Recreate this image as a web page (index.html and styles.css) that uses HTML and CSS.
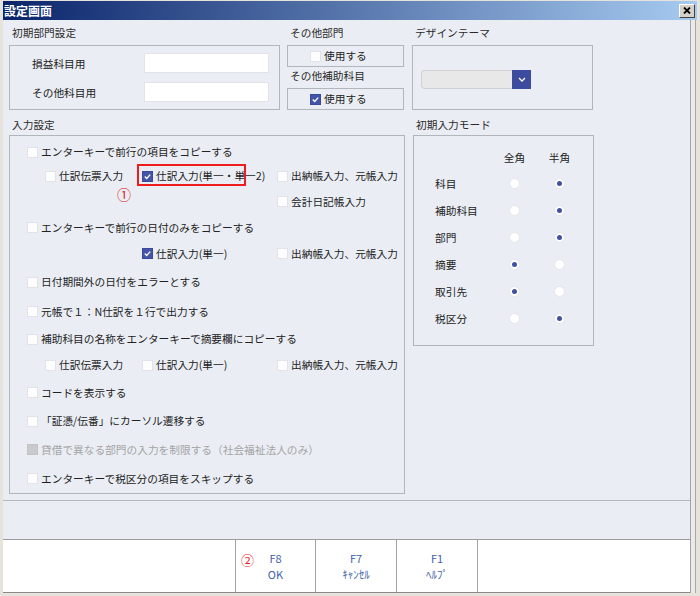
FILE: index.html
```html
<!DOCTYPE html>
<html lang="ja">
<head>
<meta charset="utf-8">
<title>設定画面</title>
<link rel="stylesheet" href="styles.css">
</head>
<body>
<div class="window">
  <div class="titlebar">
    <span class="title">設定画面</span>
    <span class="close"><svg width="8" height="7" viewBox="0 0 8 7"><path d="M1 0.5 L7 6.5 M7 0.5 L1 6.5" stroke="#000" stroke-width="1.8" fill="none"/></svg></span>
  </div>
  <div class="client">
    <div class="content">
      <div class="row-top">
        <div class="col col-dept">
          <div class="glabel">初期部門設定</div>
          <div class="gbox dept-box">
            <span class="flabel">損益科目用</span><span class="field"></span>
            <span class="flabel">その他科目用</span><span class="field"></span>
          </div>
        </div>
        <div class="col col-other">
          <div class="glabel">その他部門</div>
          <div class="gbox mini-box">
            <span class="item"><span class="cb"></span>使用する</span>
          </div>
          <div class="glabel glabel-2">その他補助科目</div>
          <div class="gbox mini-box">
            <span class="item"><span class="cb on"><svg width="9" height="9" viewBox="0 0 9 9"><path d="M1.8 4.6 L3.7 6.4 L7.2 2.6" fill="none" stroke="#fff" stroke-width="1.4"/></svg></span>使用する</span>
          </div>
        </div>
        <div class="col col-theme">
          <div class="glabel">デザインテーマ</div>
          <div class="gbox theme-box">
            <div class="select">
              <span class="select-field"></span>
              <span class="select-btn"><svg width="8" height="5" viewBox="0 0 8 5"><path d="M1 1 L4 4 L7 1" fill="none" stroke="#fff" stroke-width="1.3"/></svg></span>
            </div>
          </div>
        </div>
      </div>

      <div class="row-mid">
        <div class="col col-input">
          <div class="glabel">入力設定</div>
          <div class="gbox input-box">
            <span class="item main"><span class="cb"></span>エンターキーで前行の項目をコピーする</span>
            <span class="item c2"><span class="cb"></span>仕訳伝票入力</span>
            <span class="item c3"><span class="cb on"><svg width="9" height="9" viewBox="0 0 9 9"><path d="M1.8 4.6 L3.7 6.4 L7.2 2.6" fill="none" stroke="#fff" stroke-width="1.4"/></svg></span>仕訳入力(単一・単一2)</span>
            <span class="item c4"><span class="cb"></span>出納帳入力、元帳入力</span>
            <span class="item c4"><span class="cb"></span>会計日記帳入力</span>
            <span class="item main"><span class="cb"></span>エンターキーで前行の日付のみをコピーする</span>
            <span class="item c3"><span class="cb on"><svg width="9" height="9" viewBox="0 0 9 9"><path d="M1.8 4.6 L3.7 6.4 L7.2 2.6" fill="none" stroke="#fff" stroke-width="1.4"/></svg></span>仕訳入力(単一)</span>
            <span class="item c4"><span class="cb"></span>出納帳入力、元帳入力</span>
            <span class="item main"><span class="cb"></span>日付期間外の日付をエラーとする</span>
            <span class="item main"><span class="cb"></span>元帳で１：N仕訳を１行で出力する</span>
            <span class="item main"><span class="cb"></span>補助科目の名称をエンターキーで摘要欄にコピーする</span>
            <span class="item c2"><span class="cb"></span>仕訳伝票入力</span>
            <span class="item c3"><span class="cb"></span>仕訳入力(単一)</span>
            <span class="item c4"><span class="cb"></span>出納帳入力、元帳入力</span>
            <span class="item main"><span class="cb"></span>コードを表示する</span>
            <span class="item main"><span class="cb"></span>「証憑/伝番」にカーソル遷移する</span>
            <span class="item main disabled"><span class="cb dis"></span>貸借で異なる部門の入力を制限する（社会福祉法人のみ）</span>
            <span class="item main"><span class="cb"></span>エンターキーで税区分の項目をスキップする</span>
            <span class="highlight"></span>
            <span class="mark mark-1">①</span>
          </div>
        </div>
        <div class="col col-mode">
          <div class="glabel">初期入力モード</div>
          <div class="gbox mode-box">
            <span></span><span class="mh">全角</span><span class="mh">半角</span>
            <span class="ml">科目</span><span class="rb"></span><span class="rb on"></span>
            <span class="ml">補助科目</span><span class="rb"></span><span class="rb on"></span>
            <span class="ml">部門</span><span class="rb"></span><span class="rb on"></span>
            <span class="ml">摘要</span><span class="rb on"></span><span class="rb"></span>
            <span class="ml">取引先</span><span class="rb on"></span><span class="rb"></span>
            <span class="ml">税区分</span><span class="rb"></span><span class="rb on"></span>
          </div>
        </div>
      </div>
    </div>
    <div class="spacer"></div>
    <div class="footer">
      <div class="fpad"></div>
      <div class="fkey"><span class="mark mark-2">②</span><span>F8</span><span>OK</span></div>
      <div class="fkey"><span>F7</span><span>ｷｬﾝｾﾙ</span></div>
      <div class="fkey"><span>F1</span><span>ﾍﾙﾌﾟ</span></div>
      <div class="fkey"></div>
    </div>
  </div>
</div>
</body>
</html>
```

FILE: styles.css
```css
body {
  margin: 0;
}

.window {
  width: 700px;
  height: 596px;
  box-sizing: border-box;
  padding: 1px 3px 3px 3px;
  background: #e6e3dc;
  display: flex;
  flex-direction: column;
  font-family: "Noto Sans CJK JP", "Noto Sans", sans-serif;
  font-size: 10.7px;
  color: #222;
}

.titlebar {
  height: 19px;
  flex: none;
  display: flex;
  align-items: center;
  justify-content: space-between;
  padding: 0 2px 0 1px;
  background: linear-gradient(to right, #0a246a, #a6caf0);
}

.title {
  color: #fff;
  font-weight: bold;
  font-size: 12px;
  line-height: 19px;
}

.close {
  width: 14px;
  height: 12px;
  background: #d4d0c8;
  border: 1px solid;
  border-color: #fff #404040 #404040 #fff;
  display: flex;
  align-items: center;
  justify-content: center;
}

.client {
  flex: 1;
  min-height: 0;
  display: flex;
  flex-direction: column;
  background: #eaeef4;
  margin-right: 6px;
  border-right: 1px solid #a0a4aa;
  box-shadow: 4px 0 0 #eceae4, 5px 0 0 #a8a8a8;
}

.content {
  flex: 1;
  padding: 5px 0 0 6px;
}

.row-top {
  display: flex;
}

.col-dept {
  width: 271px;
}

.col-other {
  width: 117px;
  margin-left: 7px;
}

.col-theme {
  width: 181px;
  margin-left: 8px;
}

.glabel {
  height: 16px;
  line-height: 16px;
  margin-bottom: 4px;
  padding-left: 3px;
  white-space: nowrap;
  color: #2a2a2a;
}

.glabel-2 {
  margin-top: 1px;
}

.gbox {
  border: 1px solid #b1b5bc;
  box-sizing: border-box;
}

.dept-box {
  height: 65px;
  display: grid;
  grid-template-columns: 112px 125px;
  grid-template-rows: 20px 20px;
  row-gap: 9px;
  padding: 7px 0 0 22px;
  align-items: center;
}

.flabel {
  white-space: nowrap;
}

.field {
  height: 20px;
  background: #fff;
  border: 1px solid #e0e3e8;
  box-sizing: border-box;
}

.mini-box {
  height: 22px;
  display: flex;
  align-items: center;
  padding-left: 22px;
}

.theme-box {
  height: 65px;
  padding: 24px 0 0 8px;
}

.select {
  display: flex;
  width: 110px;
  height: 19px;
}

.select-field {
  flex: 1;
  background: #e8e8e9;
  border: 1px solid #cfd0d3;
  border-right: none;
  border-radius: 4px 0 0 4px;
}

.select-btn {
  width: 19px;
  background: #3d4b9f;
  display: flex;
  align-items: center;
  justify-content: center;
}

.row-mid {
  display: flex;
  margin-top: 7px;
}

.row-mid .glabel {
  margin-bottom: 2px;
}

.col-input {
  width: 396px;
}

.col-mode {
  width: 181px;
  margin-left: 8px;
}

.input-box {
  position: relative;
  height: 359px;
  display: grid;
  grid-template-columns: 18px 97px 135px 1fr;
  grid-template-rows: 24px 24px 27px 25px 27px 30px 29px 26px 26px 29px 28px 29px 29px;
  padding: 4px 0 0 17px;
  align-items: center;
}

.item {
  display: flex;
  align-items: center;
  gap: 3px;
  white-space: nowrap;
  line-height: 14px;
}

.main { grid-column: 1 / -1; }
.c2 { grid-column: 2; }
.c3 { grid-column: 3; }
.c4 { grid-column: 4; }

.disabled {
  color: #a3a3a3;
}

.cb {
  width: 11px;
  height: 11px;
  box-sizing: border-box;
  flex: none;
  background: #fdfdfd;
  border: 1px solid #e1e3e8;
  display: inline-flex;
  align-items: center;
  justify-content: center;
}

.cb.on {
  background: #4454a6;
  border-color: #3a4a9a;
}

.cb.dis {
  background: #c9cacc;
  border-color: #c2c2c2;
}

.highlight {
  position: absolute;
  left: 127px;
  top: 28px;
  width: 109px;
  height: 22px;
  box-sizing: border-box;
  border: 2px solid #ee1c1c;
  pointer-events: none;
}

.mark {
  position: absolute;
  color: #e0201c;
  line-height: 16px;
}

.mark-1 {
  left: 107px;
  top: 50px;
  font-size: 14px;
}

.mode-box {
  height: 211px;
  display: grid;
  grid-template-columns: 57px 45px 45px;
  grid-template-rows: 26px repeat(6, 27px);
  padding: 8px 0 0 21px;
  align-items: center;
}

.mh {
  justify-self: center;
}

.ml {
  white-space: nowrap;
}

.rb {
  justify-self: center;
  width: 11px;
  height: 11px;
  box-sizing: border-box;
  border-radius: 50%;
  background: #fff;
  border: 1px solid #e3e6ea;
  display: flex;
  align-items: center;
  justify-content: center;
}

.rb.on::after {
  content: "";
  width: 5px;
  height: 5px;
  border-radius: 50%;
  background: #4152a4;
}

.spacer {
  flex: none;
  height: 38px;
  border-top: 1px solid #b4b8be;
}

.footer {
  flex: none;
  height: 54px;
  box-sizing: border-box;
  border-top: 1px solid #9c9c9c;
  border-bottom: 1px solid #8a8a8a;
  background: #fff;
  display: grid;
  grid-template-columns: 232px 80px 81px 81px 1fr;
}

.fkey {
  position: relative;
  border-left: 1px solid #a4a4a4;
  display: flex;
  flex-direction: column;
  align-items: center;
  justify-content: center;
  color: #4060a8;
  font-size: 11px;
  line-height: 16px;
}

.mark-2 {
  left: 5px;
  top: 12px;
  font-size: 13px;
}
```
